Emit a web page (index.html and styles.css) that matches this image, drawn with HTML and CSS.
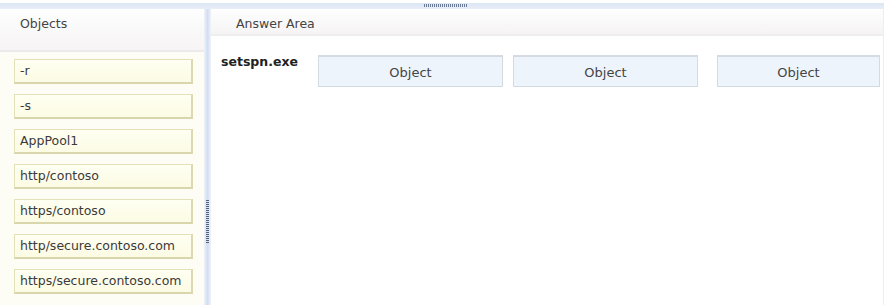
FILE: index.html
```html
<!DOCTYPE html>
<html lang="en">
<head>
    <meta charset="UTF-8">
    <title>Answer Area</title>
    <link rel="stylesheet" href="styles.css">
</head>
<body>
    <!-- TOP SPLITTER -->
    <div class="top-bar">
        <span class="grip-h"></span>
    </div>

    <div class="workspace">
        <!-- OBJECTS PANEL -->
        <div class="objects-panel">
            <div class="panel-header">Objects</div>
            <div class="object-list">
                <div class="object-item">-r</div>
                <div class="object-item">-s</div>
                <div class="object-item">AppPool1</div>
                <div class="object-item">http/contoso</div>
                <div class="object-item">https/contoso</div>
                <div class="object-item">http/secure.contoso.com</div>
                <div class="object-item">https/secure.contoso.com</div>
            </div>
        </div>

        <!-- VERTICAL SPLITTER -->
        <div class="splitter">
            <span class="grip-v"></span>
        </div>

        <!-- ANSWER AREA -->
        <div class="answer-panel">
            <div class="panel-header answer-header">Answer Area</div>
            <div class="answer-row">
                <span class="command">setspn.exe</span>
                <div class="drop-box first">Object</div>
                <div class="drop-box second">Object</div>
                <div class="drop-box third">Object</div>
            </div>
        </div>
    </div>
</body>
</html>
```

FILE: styles.css
```css
/* GENERAL */
body {
    margin: 0;
    background-color: white;
    font-family: "DejaVu Sans", Verdana, sans-serif;
    font-size: 12.5px;
    color: #333;
    width: 889px;
    height: 305px;
    overflow: hidden;
}

/* TOP SPLITTER */
.top-bar {
    height: 6px;
    margin-top: 3px;
    margin-right: 5px;
    background: linear-gradient(#dce6f4, #e8eef8);
    display: flex;
    justify-content: center;
    padding-left: 8px;
}

.grip-h {
    width: 44px;
    height: 3px;
    margin-top: 1px;
    background: repeating-linear-gradient(90deg, #6b7a94 0 1px, transparent 1px 2px);
}

.workspace {
    display: flex;
    height: 296px;
}

/* OBJECTS PANEL */
.objects-panel {
    width: 204px;
    display: flex;
    flex-direction: column;
    background-color: #fdfdf6;
}

.panel-header {
    height: 41px;
    padding-left: 20px;
    line-height: 30px;
    color: #444;
    background: linear-gradient(#fefefe, #f6f4f4);
    border-bottom: 2px solid #ecebeb;
}

.object-list {
    display: flex;
    flex-direction: column;
    gap: 10px;
    padding: 7px 11px 0 14px;
}

.object-item {
    height: 22px;
    padding-left: 5px;
    line-height: 21px;
    color: #3a3a3a;
    background: linear-gradient(#fffff2, #fcfbe4);
    border: 1px solid #e4e0b8;
    border-bottom: 2px solid #d9d5ac;
    border-right: 2px solid #dcd8b0;
}

/* VERTICAL SPLITTER */
.splitter {
    width: 7px;
    display: flex;
    justify-content: center;
    background: linear-gradient(90deg, #eef2fa, #d3def0 50%, #eef2fa);
}

.grip-v {
    width: 3px;
    height: 44px;
    margin-top: 191px;
    background: repeating-linear-gradient(#56627a 0 1px, transparent 1px 2px);
}

/* ANSWER AREA */
.answer-panel {
    flex: 1;
    display: flex;
    flex-direction: column;
    margin-right: 5px;
    border-right: 1px solid #eeeeee;
}

.answer-header {
    height: 25px;
    padding-left: 25px;
    line-height: 30px;
    border-bottom: 2px solid #eeeeee;
}

.answer-row {
    display: flex;
    align-items: flex-start;
    padding: 19px 0 0 10px;
}

.command {
    font-weight: bold;
    color: #222;
    width: 97px;
    margin-top: -1px;
}

.drop-box {
    height: 29px;
    line-height: 31px;
    text-align: center;
    font-size: 13px;
    color: #444;
    background-color: #eef4fb;
    border: 1px solid #d4dae2;
    border-top: 2px solid #d6dbe2;
}

.first {
    width: 183px;
}

.second {
    width: 183px;
    margin-left: 10px;
}

.third {
    width: 161px;
    margin-left: 19px;
}
```
